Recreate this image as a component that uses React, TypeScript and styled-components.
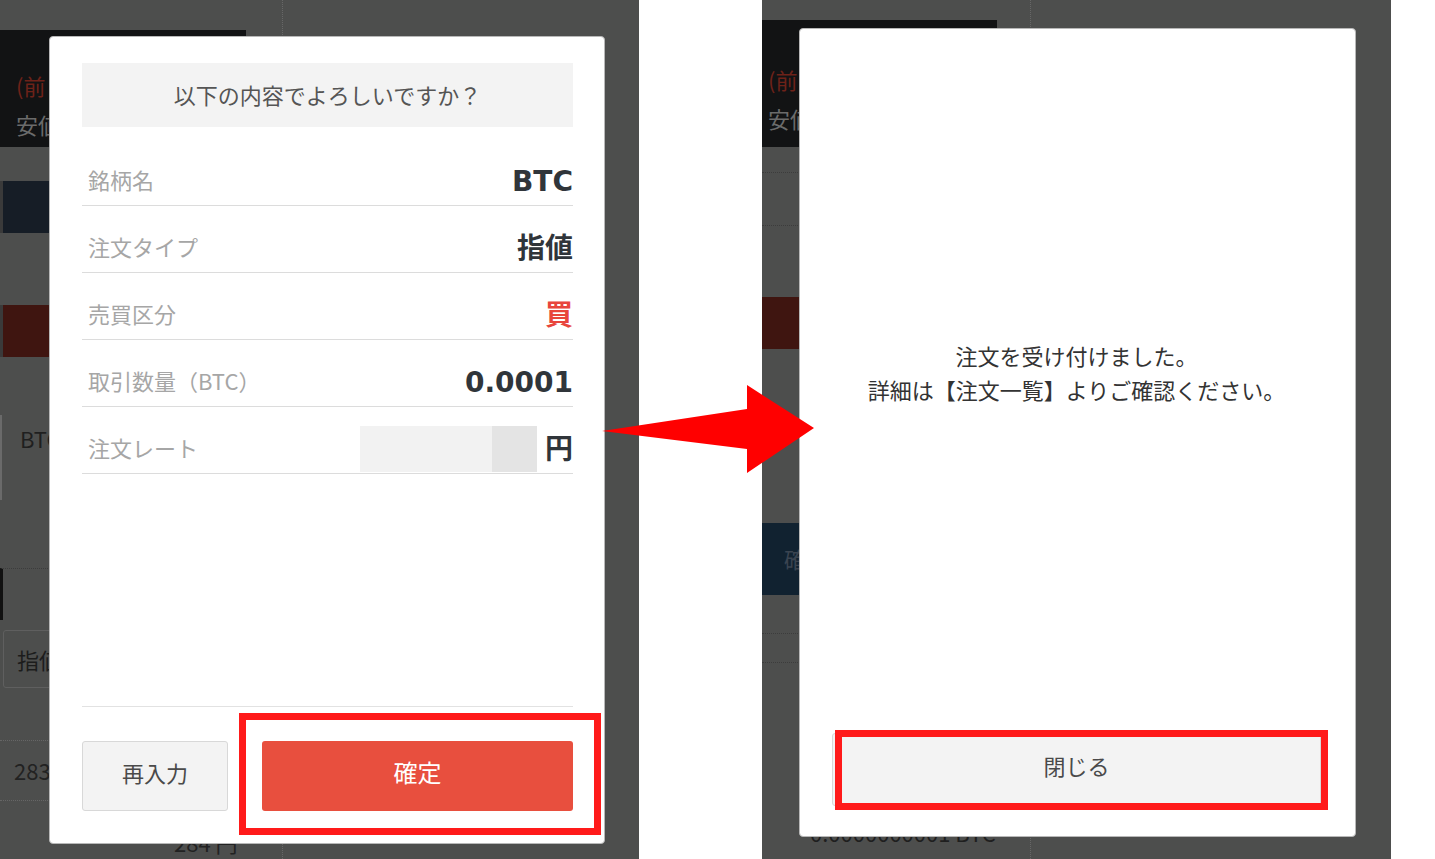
import React from "react";
import styled, { createGlobalStyle } from "styled-components";

const GlobalStyle = createGlobalStyle`
  html, body {
    margin: 0;
    padding: 0;
    background: #fff;
  }
  body {
    font-family: "Noto Sans CJK JP", "Noto Sans", sans-serif;
  }
`;

const Page = styled.div`
  position: relative;
  display: flex;
  width: 1435px;
  height: 859px;
  overflow: hidden;
  background: #fff;
`;

const Shot = styled.div<{ $width: number }>`
  position: relative;
  flex: none;
  width: ${(p) => p.$width}px;
  height: 100%;
  overflow: hidden;
  background: #4d4e4d;
`;

const Spacer = styled.div<{ $width: number }>`
  flex: none;
  width: ${(p) => p.$width}px;
`;

// dimmed page behind the modal
const Underlay = styled.div<{ $width: number }>`
  display: flex;
  flex-direction: column;
  box-sizing: border-box;
  width: ${(p) => p.$width}px;
  height: 100%;
  border-right: 1px dotted #676767;
`;

const DimBlock = styled.div<{
  $mt: number;
  $h: number;
  $bg?: string;
  $w?: string;
  $pad?: string;
  $border?: string;
  $left?: string;
}>`
  flex: none;
  box-sizing: border-box;
  margin-top: ${(p) => p.$mt}px;
  height: ${(p) => p.$h}px;
  width: ${(p) => p.$w ?? "100%"};
  padding: ${(p) => p.$pad ?? "0"};
  background: ${(p) => p.$bg ?? "transparent"};
  border-top: ${(p) => p.$border ?? "none"};
  border-left: ${(p) => p.$left ?? "none"};
  display: flex;
  flex-direction: column;
`;

const DimBox = styled.div`
  box-sizing: border-box;
  margin: 0 0 0 3px;
  width: 300px;
  height: 58px;
  padding-left: 13px;
  border: 1px solid #5f5f5f;
  border-radius: 3px;
  display: flex;
  align-items: center;
`;

const DimText = styled.div<{ $color: string }>`
  font-size: 22px;
  line-height: 39px;
  color: ${(p) => p.$color};
  white-space: nowrap;
`;

const Modal = styled.div<{ $left: number; $top: number; $width: number; $height: number; $pad: string }>`
  position: absolute;
  left: ${(p) => p.$left}px;
  top: ${(p) => p.$top}px;
  width: ${(p) => p.$width}px;
  height: ${(p) => p.$height}px;
  box-sizing: border-box;
  padding: ${(p) => p.$pad};
  display: flex;
  flex-direction: column;
  background: #fff;
  border: 1px solid #b8b8b8;
  border-radius: 4px;
`;

const Header = styled.div`
  flex: none;
  height: 64px;
  padding-bottom: 2px;
  box-sizing: border-box;
  background: #f3f3f3;
  display: flex;
  align-items: center;
  justify-content: center;
  font-size: 22px;
  color: #555;
`;

const List = styled.div`
  margin-top: 12px;
  display: flex;
  flex-direction: column;
`;

const Row = styled.div`
  box-sizing: border-box;
  height: 67px;
  padding-top: 16px;
  display: flex;
  align-items: center;
  justify-content: space-between;
  border-bottom: 1px solid #dcdcdc;
`;

const Label = styled.span`
  padding-left: 6px;
  padding-bottom: 2px;
  font-size: 22px;
  color: #a6a6a6;
`;

const Value = styled.span<{ $color?: string }>`
  display: flex;
  align-items: center;
  padding-top: 3px;
  font-family: "DejaVu Sans", "Noto Sans CJK JP", sans-serif;
  font-weight: bold;
  font-size: 28px;
  line-height: 1;
  color: ${(p) => p.$color ?? "#30353a"};
`;

const Redact = styled.span`
  display: inline-block;
  width: 177px;
  height: 46px;
  margin: -16px 8px -14px 0;
  background: linear-gradient(to right, #f2f2f2 0 132px, #e4e4e4 132px 100%);
`;

const Fill = styled.div`
  flex: 1;
`;

const Footer = styled.div`
  flex: none;
  display: flex;
  gap: 34px;
  padding-top: 34px;
  border-top: 1px solid #e2e2e2;
`;

const GhostButton = styled.button<{ $width?: string; $height: number }>`
  flex: none;
  width: ${(p) => p.$width ?? "100%"};
  height: ${(p) => p.$height}px;
  box-sizing: border-box;
  background: #f3f3f3;
  border: 1px solid #d8d8d8;
  border-radius: 3px;
  font-family: inherit;
  font-size: 22px;
  color: #4a4a4a;
  padding: 0 0 9px;
`;

const PrimaryButton = styled.button`
  flex: 1;
  height: 70px;
  border: none;
  border-radius: 3px;
  background: #e84f3e;
  font-family: inherit;
  font-size: 24px;
  color: #fff;
  padding: 0 0 9px;
`;

const Message = styled.div`
  flex: 1;
  display: flex;
  flex-direction: column;
  align-items: center;
  justify-content: center;
  padding-bottom: 18px;
  font-size: 22px;
  line-height: 34px;
  color: #333;
`;

const Highlight = styled.div<{ $left: number; $top: number; $width: number; $height: number }>`
  position: absolute;
  left: ${(p) => p.$left}px;
  top: ${(p) => p.$top}px;
  width: ${(p) => p.$width}px;
  height: ${(p) => p.$height}px;
  box-sizing: border-box;
  border: 7px solid #ff1a1a;
`;

const Arrow = styled.svg`
  position: absolute;
  left: 600px;
  top: 383px;
`;

const rows = [
  { label: "銘柄名", value: "BTC" },
  { label: "注文タイプ", value: "指値" },
  { label: "売買区分", value: "買", color: "#e8453c" },
  { label: "取引数量（BTC）", value: "0.0001" },
];

function LeftUnderlay() {
  return (
    <Underlay $width={283}>
      <DimBlock $mt={30} $h={117} $w="246px" $bg="#121314" $pad="36px 0 0 16px">
        <DimText $color="#6e2219">(前日比)</DimText>
        <DimText $color="#6b6b6b">安値</DimText>
      </DimBlock>
      <DimBlock $mt={34} $h={52} $w="calc(100% - 3px)" $bg="#161d26" $left="3px solid #3a3a3a" />
      <DimBlock $mt={72} $h={52} $w="calc(100% - 3px)" $bg="#3f1510" $left="3px solid #3a3a3a" />
      <DimBlock $mt={58} $h={85} $left="2px solid #6a6a6a" $pad="4px 0 0 18px">
        <DimText $color="#1f1f1f">BTC</DimText>
      </DimBlock>
      <DimBlock $mt={68} $h={52} $border="1px dotted #3c3c3c" $left="3px solid #111" />
      <DimBlock $mt={10} $h={58}>
        <DimBox>
          <DimText $color="#1c1c1c">指値</DimText>
        </DimBox>
      </DimBlock>
      <DimBlock $mt={52} $h={60} $border="1px dotted #666" $pad="10px 0 0 14px">
        <DimText $color="#222">283</DimText>
      </DimBlock>
      <DimBlock $mt={0} $h={60} $border="1px dotted #666" $pad="22px 0 0 174px">
        <DimText $color="#222">284 円</DimText>
      </DimBlock>
    </Underlay>
  );
}

function RightUnderlay() {
  return (
    <Underlay $width={269}>
      <DimBlock $mt={20} $h={127} $w="235px" $bg="#121314" $pad="40px 0 0 6px">
        <DimText $color="#6e2219">(前日比)</DimText>
        <DimText $color="#6b6b6b">安値</DimText>
      </DimBlock>
      <DimBlock $mt={25} $h={53} $border="1px dotted #3c3c3c" />
      <DimBlock $mt={0} $h={72} $border="1px dotted #3c3c3c" />
      <DimBlock $mt={0} $h={52} $bg="#3f1510" />
      <DimBlock $mt={174} $h={72} $bg="#112230" $pad="16px 0 0 22px">
        <DimText $color="#3a4450">確認画面へ</DimText>
      </DimBlock>
      <DimBlock $mt={38} $h={29} $border="1px dotted #3c3c3c" />
      <DimBlock $mt={0} $h={150} $border="1px dotted #3c3c3c" $pad="150px 0 0 48px">
        <DimText $color="#1f1f1f">0.0000000001 BTC</DimText>
        <DimText $color="#1f1f1f">注文後残高（概算）</DimText>
      </DimBlock>
    </Underlay>
  );
}

export default function App() {
  return (
    <>
      <GlobalStyle />
      <Page>
        <Shot $width={639}>
          <LeftUnderlay />
          <Modal $left={49} $top={36} $width={556} $height={808} $pad="26px 31px 32px 32px">
            <Header>以下の内容でよろしいですか？</Header>
            <List>
              {rows.map((r) => (
                <Row key={r.label}>
                  <Label>{r.label}</Label>
                  <Value $color={r.color}>{r.value}</Value>
                </Row>
              ))}
              <Row>
                <Label>注文レート</Label>
                <Value>
                  <Redact />円
                </Value>
              </Row>
            </List>
            <Fill />
            <Footer>
              <GhostButton $width="146px" $height={70}>再入力</GhostButton>
              <PrimaryButton>確定</PrimaryButton>
            </Footer>
          </Modal>
          <Highlight $left={239} $top={713} $width={362} $height={122} />
        </Shot>
        <Spacer $width={123} />
        <Shot $width={629}>
          <RightUnderlay />
          <Modal $left={37} $top={28} $width={557} $height={809} $pad="0 34px 30px 32px">
            <Message>
              <div>注文を受け付けました。</div>
              <div>詳細は【注文一覧】よりご確認ください。</div>
            </Message>
            <GhostButton $height={73}>閉じる</GhostButton>
          </Modal>
          <Highlight $left={73} $top={730} $width={493} $height={80} />
        </Shot>
        <Arrow width="216" height="92" viewBox="0 0 216 92">
          <polygon points="2,48 147,26 147,2 214,45 147,90 147,66" fill="#ff0000" />
        </Arrow>
      </Page>
    </>
  );
}
